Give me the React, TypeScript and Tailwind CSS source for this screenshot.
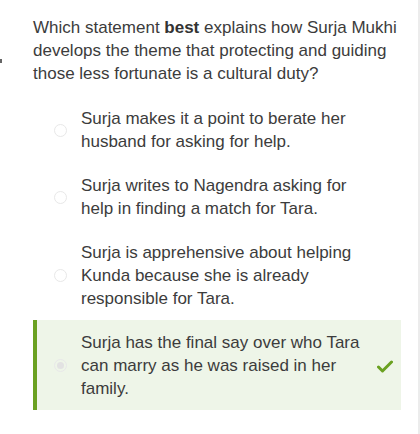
import React from "react";

const options = [
  "Surja makes it a point to berate her husband for asking for help.",
  "Surja writes to Nagendra asking for help in finding a match for Tara.",
  "Surja is apprehensive about helping Kunda because she is already responsible for Tara.",
  "Surja has the final say over who Tara can marry as he was raised in her family.",
];

export default function App() {
  return (
    <div
      className="relative w-[420px] h-[434px] bg-white text-[#3c3c3c] overflow-hidden"
      style={{ fontFamily: '"Liberation Sans", Arial, sans-serif' }}
    >
      <div className="absolute left-0 top-[59px] w-[2px] h-[4px] bg-[#666]" />
      <div className="absolute right-0 top-0 w-[2px] h-full bg-[#ececec]" />
      <div className="pl-[33px] pt-[16px] pr-[16px]">
        <p className="text-[17px] leading-[23px]">
          Which statement <b className="text-[#333]">best</b> explains how Surja Mukhi develops the theme that protecting and guiding those less fortunate is a cultural duty?
        </p>
        <div className="mt-[11px] w-[368px]">
          {options.map((o, i) => {
            const correct = i === 3;
            return (
              <div
                key={i}
                className={
                  correct
                    ? "flex items-center pt-[11px] pb-[10px] border-l-[4px] border-[#6aa121] bg-[#eef5e8]"
                    : "flex items-center pt-[11px] pb-[10px] border-l-[4px] border-transparent"
                }
              >
                <div className="w-[44px] flex justify-center shrink-0 pl-[2px]">
                  <div className="w-[13px] h-[13px] rounded-full border border-[#e8e8e8] flex items-center justify-center">
                    {correct && <div className="w-[7px] h-[7px] rounded-full bg-[#e2e2e2]" />}
                  </div>
                </div>
                <div className="w-[282px] text-[17px] leading-[23px]">{o}</div>
                {correct && (
                  <svg width="16" height="13" viewBox="0 0 16 13" className="ml-[14px] mt-[2px]">
                    <path d="M1.5 7 L5.5 11 L14.5 2" stroke="#6aa121" strokeWidth="3" fill="none" strokeLinecap="round" strokeLinejoin="round" />
                  </svg>
                )}
              </div>
            );
          })}
        </div>
      </div>
    </div>
  );
}
